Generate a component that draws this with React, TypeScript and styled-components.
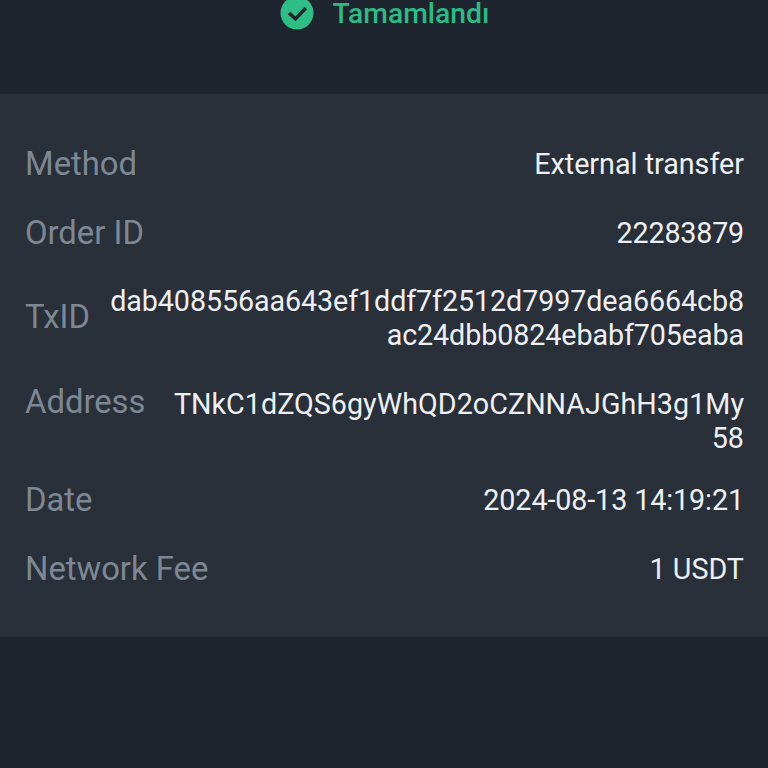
import React from "react";
import styled, { createGlobalStyle } from "styled-components";

const Global = createGlobalStyle`
  html, body { margin: 0; padding: 0; background: #1f252e; }
  body { font-family: Roboto, "Liberation Sans", sans-serif; }
`;

const Page = styled.div`
  width: 768px;
  height: 768px;
  overflow: hidden;
  background: #1f252e;
  display: flex;
  flex-direction: column;
`;

const Header = styled.header`
  height: 94px;
  flex: none;
  box-sizing: border-box;
  display: flex;
  justify-content: center;
  align-items: flex-start;
  gap: 19px;
  margin-left: 1px;
`;

const StatusIcon = styled.svg`
  width: 34px;
  height: 34px;
  flex: none;
  margin-top: -4px;
`;

const StatusText = styled.span`
  color: #2eb985;
  font-size: 28.3px;
  font-weight: 500;
  line-height: 28px;
`;

const Panel = styled.section`
  height: 543px;
  flex: none;
  box-sizing: border-box;
  padding: 53px 24px 0 25px;
  background: #2a303a;
  border-bottom: 1px solid #262b35;
  display: flex;
  flex-direction: column;
`;

const Row = styled.div<{ $top?: boolean; $after: number }>`
  display: flex;
  justify-content: space-between;
  align-items: ${(p) => (p.$top ? "flex-start" : "center")};
  margin-bottom: ${(p) => p.$after}px;
`;

const Label = styled.span<{ $lift: number }>`
  color: #7e8894;
  font-size: 32.8px;
  line-height: 34px;
  white-space: nowrap;
  margin-top: ${(p) => -p.$lift}px;
`;

const Value = styled.div<{ $spacing: number }>`
  color: #eef0f4;
  font-size: 28.7px;
  line-height: 34px;
  text-align: right;
  white-space: nowrap;
  letter-spacing: ${(p) => p.$spacing}px;
`;

const ValueLine = styled.div``;

const rows: { label: string; lines: string[]; top?: boolean; after: number; lift: number; spacing: number }[] = [
  { label: "Method", lines: ["External transfer"], after: 35, lift: 0, spacing: 0 },
  { label: "Order ID", lines: ["22283879"], after: 34, lift: 0, spacing: -0.2 },
  { label: "TxID", lines: ["dab408556aa643ef1ddf7f2512d7997dea6664cb8", "ac24dbb0824ebabf705eaba"], after: 35, lift: 2, spacing: -0.1 },
  { label: "Address", lines: ["TNkC1dZQS6gyWhQD2oCZNNAJGhH3g1My", "58"], top: true, after: 28, lift: 2, spacing: 0.03 },
  { label: "Date", lines: ["2024-08-13 14:19:21"], after: 35, lift: 0, spacing: -0.1 },
  { label: "Network Fee", lines: ["1 USDT"], after: 0, lift: 0, spacing: 0 },
];

export default function App() {
  return (
    <Page>
      <Global />
      <Header>
        <StatusIcon viewBox="0 0 34 34" aria-hidden="true">
          <circle cx="17" cy="17" r="16.5" fill="#2ebd85" />
          <path d="M9 17l6.5 5.8L25.8 12" fill="none" stroke="#1f252e" strokeWidth="3.4" />
        </StatusIcon>
        <StatusText>Tamamlandı</StatusText>
      </Header>
      <Panel>
        {rows.map((r) => (
          <Row key={r.label} $top={r.top} $after={r.after}>
            <Label $lift={r.lift}>{r.label}</Label>
            <Value $spacing={r.spacing}>
              {r.lines.map((l) => (
                <ValueLine key={l}>{l}</ValueLine>
              ))}
            </Value>
          </Row>
        ))}
      </Panel>
    </Page>
  );
}
